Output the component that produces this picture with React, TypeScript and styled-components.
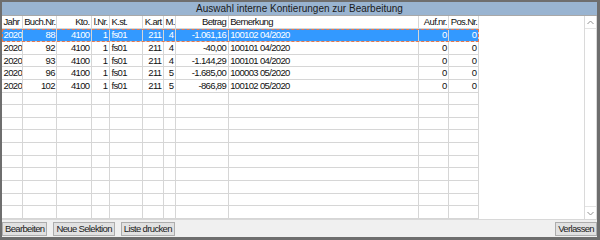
import { FC } from 'react';
import styled, { createGlobalStyle } from 'styled-components';

const GlobalStyle = createGlobalStyle`
  html, body {
    margin: 0;
    padding: 0;
    background: #ffffff;
  }
  body {
    font-family: "Liberation Sans", Arial, sans-serif;
  }
`;

const COLS = [20.7, 34.6, 34.7, 18, 33.3, 20.7, 12, 52.7, 190.6, 30, 29.7];
const TEMPLATE = COLS.map((c) => `${c}px`).join(' ');
const ROW_H = 12.67;

type Align = 'left' | 'right';

const columns: { title: string; head: Align; cell: Align }[] = [
  { title: 'Jahr', head: 'left', cell: 'left' },
  { title: 'Buch.Nr.', head: 'right', cell: 'right' },
  { title: 'Kto.', head: 'right', cell: 'right' },
  { title: 'l.Nr.', head: 'right', cell: 'right' },
  { title: 'K.st.', head: 'left', cell: 'left' },
  { title: 'K.art', head: 'left', cell: 'right' },
  { title: 'M.', head: 'left', cell: 'right' },
  { title: 'Betrag', head: 'right', cell: 'right' },
  { title: 'Bemerkung', head: 'left', cell: 'left' },
  { title: 'Auf.nr.', head: 'right', cell: 'right' },
  { title: 'Pos.Nr.', head: 'right', cell: 'right' },
];

const rows: string[][] = [
  ['2020', '88', '4100', '1', 'fs01', '211', '4', '-1.061,16', '100102 04/2020', '0', '0'],
  ['2020', '92', '4100', '1', 'fs01', '211', '4', '-40,00', '100101 04/2020', '0', '0'],
  ['2020', '93', '4100', '1', 'fs01', '211', '4', '-1.144,29', '100101 04/2020', '0', '0'],
  ['2020', '96', '4100', '1', 'fs01', '211', '5', '-1.685,00', '100003 05/2020', '0', '0'],
  ['2020', '102', '4100', '1', 'fs01', '211', '5', '-866,89', '100102 05/2020', '0', '0'],
];

const EMPTY_ROWS = 10;

const Window = styled.div`
  width: 600px;
  height: 240px;
  box-sizing: border-box;
  border-style: solid;
  border-color: #6e6e6e;
  border-width: 2px 3px 3px 2px;
  display: flex;
  flex-direction: column;
  background: #f0f0f0;
  overflow: hidden;
`;

const TitleBar = styled.div`
  height: 13px;
  background: #99b4d1;
  border-bottom: 1px solid #a8a8a8;
  display: flex;
  align-items: center;
  justify-content: center;
  font-size: 10px;
  color: #1a1a1a;
  line-height: 13px;
`;

const Body = styled.div`
  flex: 1;
  display: flex;
  min-height: 0;
`;

const GridArea = styled.div`
  flex: 1;
  background: #ffffff;
  display: flex;
  flex-direction: column;
`;

const Row = styled.div<{ $selected?: boolean; $header?: boolean }>`
  display: grid;
  grid-template-columns: ${TEMPLATE};
  height: ${({ $header }) => ($header ? 13.3 : ROW_H)}px;
  box-sizing: border-box;
  width: 477px;
  border-bottom: 1px solid #d6d6d6;
  background: ${({ $selected }) => ($selected ? '#3399ff' : '#ffffff')};
  color: ${({ $selected }) => ($selected ? '#ffffff' : '#111111')};
  outline: ${({ $selected }) => ($selected ? '1px dashed #e8784f' : 'none')};
  outline-offset: -1px;
  font-size: 9.5px;
  letter-spacing: -0.65px;
`;

const Cell = styled.div<{ $align: Align }>`
  box-sizing: border-box;
  border-right: 1px solid #d6d6d6;
  padding: 0 1.5px 0 1.5px;
  text-align: ${({ $align }) => $align};
  white-space: nowrap;
  overflow: hidden;
  line-height: 12px;
`;

const Scrollbar = styled.div`
  width: 13px;
  box-sizing: border-box;
  background: #ffffff;
  border-left: 1px solid #dadada;
  border-right: 1px solid #dadada;
  display: flex;
  flex-direction: column;
  justify-content: space-between;
`;

const ScrollArrow = styled.div<{ $down?: boolean }>`
  height: 12px;
  display: flex;
  align-items: center;
  justify-content: center;
  border-top: ${({ $down }) => ($down ? '1px solid #e4e4e4' : 'none')};
  border-bottom: ${({ $down }) => ($down ? 'none' : '1px solid #e4e4e4')};
  color: #909090;
`;

const Footer = styled.div`
  height: 17px;
  display: flex;
  align-items: center;
  gap: 6px;
  border-top: 1px solid #d8d8d8;
  background: #f0f0f0;
`;

const Button = styled.div`
  height: 14px;
  box-sizing: border-box;
  padding: 0 2px;
  border: 1px solid #adadad;
  background: #e1e1e1;
  font-size: 9.5px;
  letter-spacing: -0.65px;
  color: #222222;
  display: flex;
  align-items: center;

  &:last-child {
    margin-left: auto;
  }
`;

const Chevron: FC<{ down?: boolean }> = ({ down }) => (
  <svg width="7" height="5" viewBox="0 0 7 5">
    <path
      d={down ? 'M0.5 1 L3.5 4 L6.5 1' : 'M0.5 4 L3.5 1 L6.5 4'}
      fill="none"
      stroke="currentColor"
      strokeWidth="1"
    />
  </svg>
);

const App: FC = () => (
  <>
    <GlobalStyle />
    <Window>
      <TitleBar>Auswahl interne Kontierungen zur Bearbeitung</TitleBar>
      <Body>
        <GridArea>
          <Row $header>
            {columns.map((c) => (
              <Cell key={c.title} $align={c.head}>
                {c.title}
              </Cell>
            ))}
          </Row>
          {rows.map((r, i) => (
            <Row key={i} $selected={i === 0}>
              {r.map((v, j) => (
                <Cell key={j} $align={columns[j].cell}>
                  {v}
                </Cell>
              ))}
            </Row>
          ))}
          {Array.from({ length: EMPTY_ROWS }).map((_, i) => (
            <Row key={`e${i}`}>
              {columns.map((c) => (
                <Cell key={c.title} $align="left" />
              ))}
            </Row>
          ))}
        </GridArea>
        <Scrollbar>
          <ScrollArrow>
            <Chevron />
          </ScrollArrow>
          <ScrollArrow $down>
            <Chevron down />
          </ScrollArrow>
        </Scrollbar>
      </Body>
      <Footer>
        <Button>Bearbeiten</Button>
        <Button>Neue Selektion</Button>
        <Button>Liste drucken</Button>
        <Button>Verlassen</Button>
      </Footer>
    </Window>
  </>
);

export default App;
